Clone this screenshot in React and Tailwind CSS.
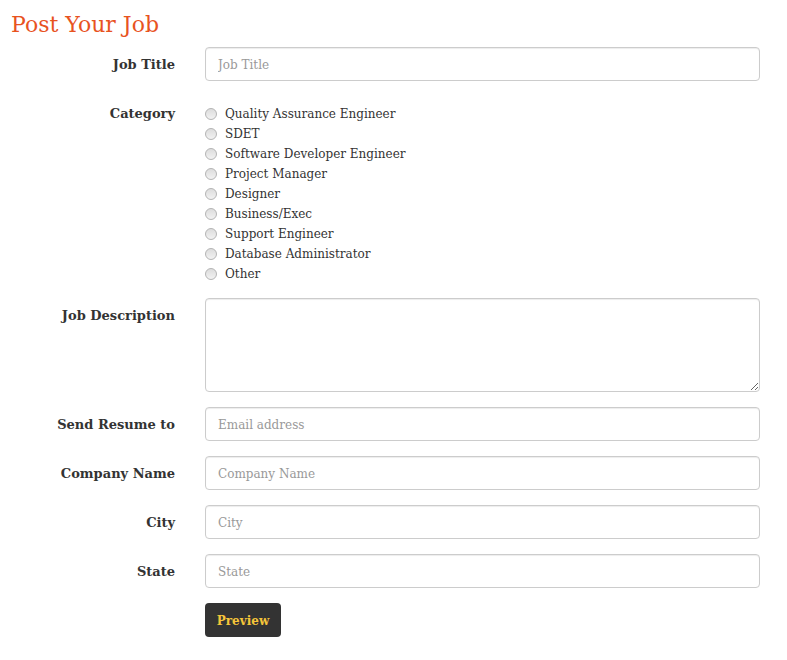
import React from "react";

const categories = [
  "Quality Assurance Engineer",
  "SDET",
  "Software Developer Engineer",
  "Project Manager",
  "Designer",
  "Business/Exec",
  "Support Engineer",
  "Database Administrator",
  "Other",
];

function Label({ children }) {
  return (
    <label className="w-[175px] shrink-0 pt-[8px] text-right text-[13px] font-bold leading-[20px] text-[#333]">
      {children}
    </label>
  );
}

function Field({ label, placeholder, type = "text" }) {
  return (
    <div className="flex gap-[30px]">
      <Label>{label}</Label>
      <input
        type={type}
        placeholder={placeholder}
        className="h-[34px] w-[555px] rounded-[4px] border border-[#ccc] bg-white px-[12px] pt-[1px] text-[12px] text-[#555] shadow-[inset_0_1px_1px_rgba(0,0,0,0.075)] outline-none placeholder:text-[#999]"
      />
    </div>
  );
}

function Radio() {
  return (
    <span className="mr-[8px] inline-block h-[12px] w-[12px] shrink-0 rounded-full border border-[#b4b4b4] bg-gradient-to-b from-[#dcdcdc] to-[#f2f2f2]" />
  );
}

export default function App() {
  return (
    <div
      className="min-h-[660px] w-[787px] bg-white text-[12px] text-[#333]"
      style={{ fontFamily: '"DejaVu Serif", "Liberation Serif", serif' }}
    >
      <h1 className="h-[47px] pl-[11px] pt-[10px] text-[22px] leading-[30px] text-[#e8531f]">
        Post Your Job
      </h1>
      <div className="flex flex-col gap-[15px]">
        <Field label="Job Title" placeholder="Job Title" />
        <div className="flex gap-[30px]">
          <Label>Category</Label>
          <div className="-mb-[1px] flex flex-col pt-[8px]">
            {categories.map((c) => (
              <div key={c} className="flex h-[20px] items-center leading-[20px]">
                <Radio />
                <span>{c}</span>
              </div>
            ))}
          </div>
        </div>
        <div className="flex gap-[30px]">
          <Label>Job Description</Label>
          <textarea className="h-[94px] w-[555px] rounded-[4px] border border-[#ccc] bg-white px-[12px] py-[6px] shadow-[inset_0_1px_1px_rgba(0,0,0,0.075)] outline-none" />
        </div>
        <Field label="Send Resume to" placeholder="Email address" />
        <Field label="Company Name" placeholder="Company Name" />
        <Field label="City" placeholder="City" />
        <Field label="State" placeholder="State" />
        <div className="flex gap-[30px]">
          <div className="w-[175px] shrink-0" />
          <button className="h-[34px] w-[76px] rounded-[4px] bg-[#333] pt-[1px] text-[12px] font-bold text-[#f5c53a]">
            Preview
          </button>
        </div>
      </div>
    </div>
  );
}
